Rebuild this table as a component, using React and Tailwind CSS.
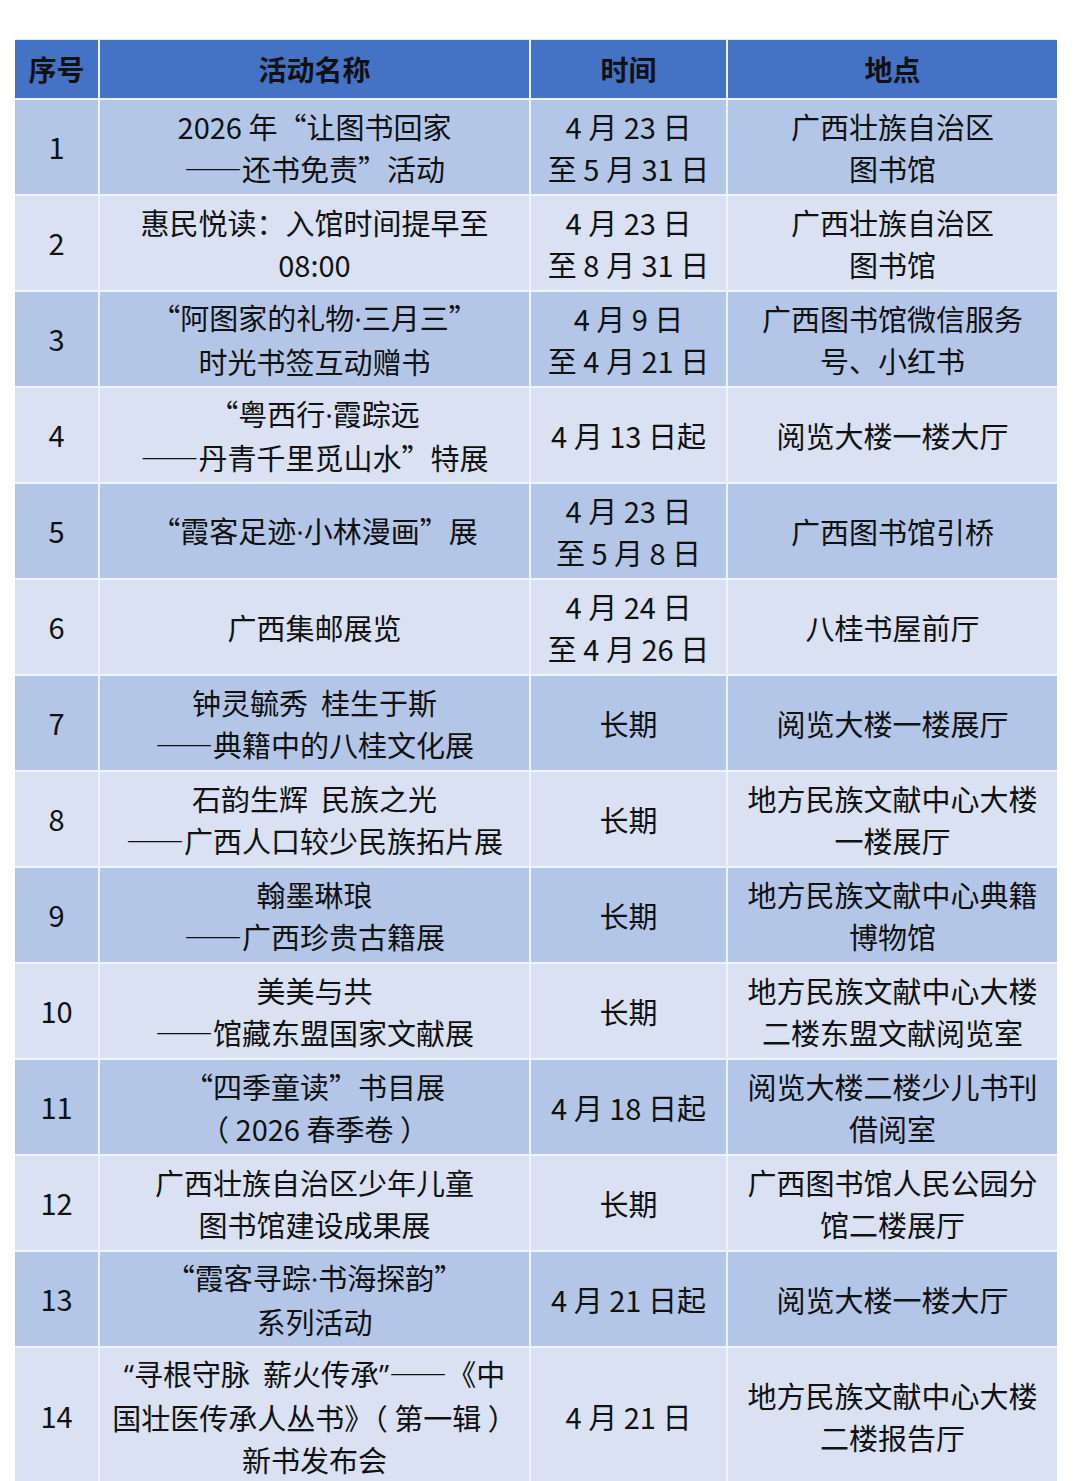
import React from "react";

const LAT = { fontFamily: '"Open Sans", "Noto Sans CJK SC", sans-serif' };

function fmt(str) {
  const parts = str.split(/(·|——|⟪|⟫)/);
  return parts.map((p, i) => {
    if (p === "·") return <span key={i} style={LAT}>·</span>;
    if (p === "——") return <span key={i} className="font-bold [font-feature-settings:'fwid']">――</span>;
    if (p === "⟪") return <span key={i} style={LAT}>“</span>;
    if (p === "⟫") return <span key={i} style={LAT}>”</span>;
    return <React.Fragment key={i}>{p}</React.Fragment>;
  });
}

const rows = [
  { n: "1", name: ["2026 年“让图书回家", "——还书免责”活动"], time: ["4 月 23 日", "至 5 月 31 日"], place: ["广西壮族自治区", "图书馆"] },
  { n: "2", name: ["惠民悦读：入馆时间提早至", "08:00"], time: ["4 月 23 日", "至 8 月 31 日"], place: ["广西壮族自治区", "图书馆"] },
  { n: "3", name: ["“阿图家的礼物·三月三”", "时光书签互动赠书"], time: ["4 月 9 日", "至 4 月 21 日"], place: ["广西图书馆微信服务", "号、小红书"] },
  { n: "4", name: ["“粤西行·霞踪远", "——丹青千里觅山水”特展"], time: ["4 月 13 日起"], place: ["阅览大楼一楼大厅"] },
  { n: "5", name: ["“霞客足迹·小林漫画”展"], time: ["4 月 23 日", "至 5 月 8 日"], place: ["广西图书馆引桥"] },
  { n: "6", name: ["广西集邮展览"], time: ["4 月 24 日", "至 4 月 26 日"], place: ["八桂书屋前厅"] },
  { n: "7", name: ["钟灵毓秀  桂生于斯", "——典籍中的八桂文化展"], time: ["长期"], place: ["阅览大楼一楼展厅"] },
  { n: "8", name: ["石韵生辉  民族之光", "——广西人口较少民族拓片展"], time: ["长期"], place: ["地方民族文献中心大楼", "一楼展厅"] },
  { n: "9", name: ["翰墨琳琅", "——广西珍贵古籍展"], time: ["长期"], place: ["地方民族文献中心典籍", "博物馆"] },
  { n: "10", name: ["美美与共", "——馆藏东盟国家文献展"], time: ["长期"], place: ["地方民族文献中心大楼", "二楼东盟文献阅览室"] },
  { n: "11", name: ["“四季童读”书目展", "（ 2026 春季卷 ）"], time: ["4 月 18 日起"], place: ["阅览大楼二楼少儿书刊", "借阅室"] },
  { n: "12", name: ["广西壮族自治区少年儿童", "图书馆建设成果展"], time: ["长期"], place: ["广西图书馆人民公园分", "馆二楼展厅"] },
  { n: "13", name: ["“霞客寻踪·书海探韵”", "系列活动"], time: ["4 月 21 日起"], place: ["阅览大楼一楼大厅"] },
  { n: "14", name: ["⟪寻根守脉  薪火传承⟫——《中", "国壮医传承人丛书》（ 第一辑 ）", "新书发布会"], time: ["4 月 21 日"], place: ["地方民族文献中心大楼", "二楼报告厅"] },
];

function Cell({ lines, bg }) {
  return (
    <div className={`${bg} flex flex-col items-center justify-center text-center`}>
      {lines.map((l, i) => (
        <div key={i} className="whitespace-pre leading-[42px]">{fmt(l)}</div>
      ))}
    </div>
  );
}

export default function App() {
  return (
    <div
      className="w-[1080px] h-[1481px] bg-white overflow-hidden text-[#111] text-[29px]"
      style={{ fontFamily: '"Noto Sans CJK SC", "Open Sans", sans-serif' }}
    >
      <div className="pt-[39px] pl-[15px]">
        <div className="w-[1042px] grid grid-cols-[83px_429px_195px_329px] gap-[2px] bg-[#eef2fa] border-t border-[#e3e9f5]">
          <div className="bg-[#4472c4] h-[58px] flex items-center justify-center font-bold text-[28px]">序号</div>
          <div className="bg-[#4472c4] h-[58px] flex items-center justify-center font-bold text-[28px]">活动名称</div>
          <div className="bg-[#4472c4] h-[58px] flex items-center justify-center font-bold text-[28px]">时间</div>
          <div className="bg-[#4472c4] h-[58px] flex items-center justify-center font-bold text-[28px]">地点</div>
          {rows.map((r, i) => {
            const bg = i % 2 === 0 ? "bg-[#b4c6e7]" : "bg-[#d9e1f2]";
            const h = i === 13 ? "h-[136px]" : "h-[94px]";
            return (
              <React.Fragment key={r.n}>
                <div className={`${bg} ${h} flex items-center justify-center`}>{r.n}</div>
                <Cell lines={r.name} bg={bg} />
                <Cell lines={r.time} bg={bg} />
                <Cell lines={r.place} bg={bg} />
              </React.Fragment>
            );
          })}
        </div>
      </div>
    </div>
  );
}
